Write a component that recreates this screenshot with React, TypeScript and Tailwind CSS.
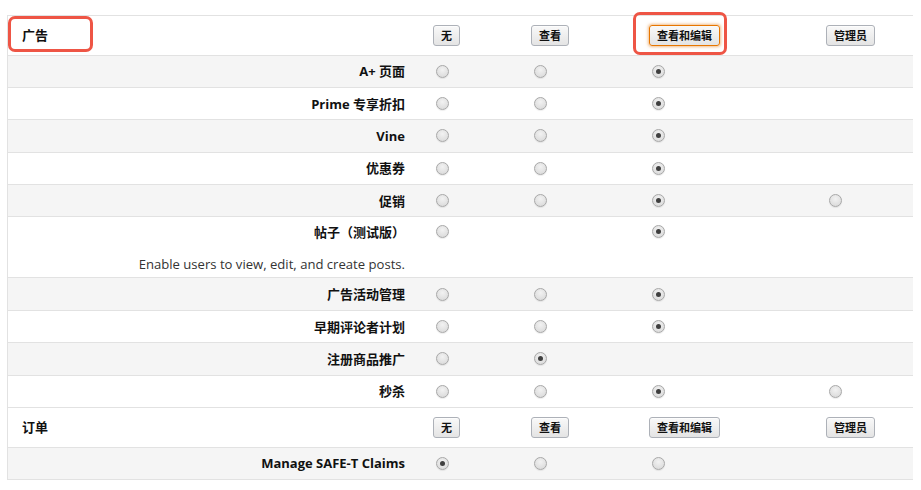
import React from "react";

type Cell = null | 0 | 1;

const FONT = { fontFamily: '"Open Sans", "Noto Sans CJK SC", sans-serif' };

function Radio({ on }: { on: boolean }) {
  return (
    <div className="ml-[3px] w-[13px] h-[13px] rounded-full border border-[#a8a8a8] bg-[radial-gradient(circle_at_50%_35%,#f2f2f2,#d6d6d6)] flex items-center justify-center shadow-[0_1px_1px_rgba(0,0,0,0.08)]">
      {on && <div className="w-[5px] h-[5px] rounded-full bg-[#3f3f3f]" />}
    </div>
  );
}

function Btn({ label, focus }: { label: string; focus?: boolean }) {
  return (
    <div
      className={
        "h-[21px] px-[7px] flex items-center rounded-[3px] border text-[11px] font-bold text-[#111] bg-gradient-to-b from-[#f9f9f9] to-[#e4e4e4] leading-none " +
        (focus
          ? "border-[#e77600] shadow-[0_0_3px_1px_rgba(228,121,17,0.5)]"
          : "border-[#adb1b8] shadow-[0_1px_0_rgba(255,255,255,0.6)_inset]")
      }
    >
      {label}
    </div>
  );
}

const GRID = "grid grid-cols-[425px_98px_118px_177px_88px]";

function HeaderRow({ title, focus }: { title: string; focus?: boolean }) {
  return (
    <div className={GRID + " h-[39.5px] items-center border-b border-[#e2e2e2] bg-white"}>
      <div className="pl-[14px] text-[13px] font-bold text-[#111]">{title}</div>
      <div className="flex"><Btn label="无" /></div>
      <div className="flex"><Btn label="查看" /></div>
      <div className="flex"><Btn label="查看和编辑" focus={focus} /></div>
      <div className="flex"><Btn label="管理员" /></div>
    </div>
  );
}

function Row({
  label,
  cells,
  gray,
  desc,
}: {
  label: string;
  cells: Cell[];
  gray: boolean;
  desc?: string;
}) {
  if (desc) {
    return (
      <div className={GRID + " h-[61px] border-b border-[#e2e2e2] " + (gray ? "bg-[#f5f5f5]" : "bg-white")}>
        <div className="pr-[28px] pt-[5px] text-right">
          <div className="text-[13px] font-bold text-[#111] leading-[20px]">{label}</div>
          <div className="text-[13.1px] text-[#333] leading-[20px] mt-[12px]">{desc}</div>
        </div>
        {cells.map((c, i) => (
          <div key={i} className="pt-[8px]">
            {c !== null && <Radio on={c === 1} />}
          </div>
        ))}
      </div>
    );
  }
  return (
    <div className={GRID + " h-[32.4px] items-center border-b border-[#e2e2e2] " + (gray ? "bg-[#f5f5f5]" : "bg-white")}>
      <div className="pr-[28px] text-right text-[13px] font-bold text-[#111] leading-[20px]">{label}</div>
      {cells.map((c, i) => (
        <div key={i} className="flex">
          {c !== null && <Radio on={c === 1} />}
        </div>
      ))}
    </div>
  );
}

const ADS: { label: string; cells: Cell[]; desc?: string }[] = [
  { label: "A+ 页面", cells: [0, 0, 1, null] },
  { label: "Prime 专享折扣", cells: [0, 0, 1, null] },
  { label: "Vine", cells: [0, 0, 1, null] },
  { label: "优惠券", cells: [0, 0, 1, null] },
  { label: "促销", cells: [0, 0, 1, 0] },
  { label: "帖子（测试版）", cells: [0, null, 1, null], desc: "Enable users to view, edit, and create posts." },
  { label: "广告活动管理", cells: [0, 0, 1, null] },
  { label: "早期评论者计划", cells: [0, 0, 1, null] },
  { label: "注册商品推广", cells: [0, 1, null, null] },
  { label: "秒杀", cells: [0, 0, 1, 0] },
];

export default function App() {
  return (
    <div className="relative w-[921px] h-[490px] bg-white overflow-hidden" style={FONT}>
      <div className="pt-[15px] pl-[7px]">
        <div className="w-[906px] border-l border-t border-[#e2e2e2]">
          <HeaderRow title="广告" focus />
          {ADS.map((r, i) => (
            <Row key={r.label} label={r.label} cells={r.cells} desc={r.desc} gray={i % 2 === 0} />
          ))}
          <HeaderRow title="订单" />
          <Row label="Manage SAFE-T Claims" cells={[1, 0, 0, null]} gray />
        </div>
      </div>
      <div className="absolute left-[8px] top-[16px] w-[85px] h-[36px] rounded-[7px] border-[3px] border-[#ee5545]" />
      <div className="absolute left-[633px] top-[12px] w-[94px] h-[43px] rounded-[7px] border-[3px] border-[#ee5545]" />
    </div>
  );
}
